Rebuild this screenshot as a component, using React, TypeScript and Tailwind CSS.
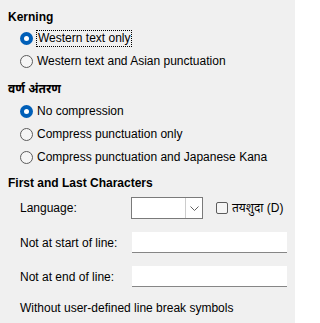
const font = { fontFamily: '"Liberation Sans", "Noto Sans", "Noto Sans Devanagari", sans-serif' };

function Radio({ checked, label, focus }: { checked?: boolean; label: string; focus?: boolean }) {
  return (
    <div className="flex h-[23px] items-center pl-[20px]">
      {checked ? (
        <span className="flex h-[13px] w-[13px] items-center justify-center rounded-full bg-[#005fb8]">
          <span className="h-[5px] w-[5px] rounded-full bg-white" />
        </span>
      ) : (
        <span className="h-[13px] w-[13px] rounded-full border border-[#5c5c5c] bg-[#f5f5f5]" />
      )}
      <span
        className={
          focus
            ? "ml-[3px] border border-dotted border-black px-[1px] leading-[15px]"
            : "ml-[4px] leading-[15px]"
        }
      >
        {label}
      </span>
    </div>
  );
}

function Heading({ children }: { children: string }) {
  return <div className="flex h-[16px] items-center pl-[8px] font-bold">{children}</div>;
}

function TextField() {
  return <div className="h-[21px] w-[155px] border-b border-[#868686] bg-white" />;
}

export default function App() {
  return (
    <div style={font} className="h-[323px] w-[295px] overflow-hidden bg-[#f0f0f0] text-[12px] text-black">
      <div className="pt-[9px]">
        <Heading>Kerning</Heading>
        <div className="mt-[2px]">
          <Radio checked focus label="Western text only" />
          <Radio label="Western text and Asian punctuation" />
        </div>
        <div className="mt-[8px]">
          <Heading>वर्ण अंतरण</Heading>
        </div>
        <div className="mt-[3px]">
          <Radio checked label="No compression" />
          <Radio label="Compress punctuation only" />
          <Radio label="Compress punctuation and Japanese Kana" />
        </div>
        <div className="mt-[6px]">
          <Heading>First and Last Characters</Heading>
        </div>

        <div className="mt-[6px] flex h-[22px] items-center pl-[20px]">
          <span className="w-[111px]">Language:</span>
          <div className="flex h-[22px] w-[72px] border border-[#7a7a7a] bg-white">
            <div className="flex-1" />
            <div className="flex w-[17px] items-center justify-center border-l border-[#cccccc] bg-white">
              <svg width="9" height="5" viewBox="0 0 9 5" fill="none">
                <path d="M0.5 0.5 L4.5 4.5 L8.5 0.5" stroke="#606060" strokeWidth="1" />
              </svg>
            </div>
          </div>
          <span className="ml-[13px] h-[12px] w-[12px] rounded-[2px] border border-[#5c5c5c] bg-[#f5f5f5]" />
          <span className="ml-[4px]">तयशुदा (D)</span>
        </div>

        <div className="mt-[13px] flex h-[21px] items-center pl-[20px]">
          <span className="w-[112px]">Not at start of line:</span>
          <TextField />
        </div>
        <div className="mt-[13px] flex h-[21px] items-center pl-[20px]">
          <span className="w-[112px]">Not at end of line:</span>
          <TextField />
        </div>
        <div className="mt-[12px] flex h-[18px] items-center pl-[20px]">
          Without user-defined line break symbols
        </div>
      </div>
    </div>
  );
}
